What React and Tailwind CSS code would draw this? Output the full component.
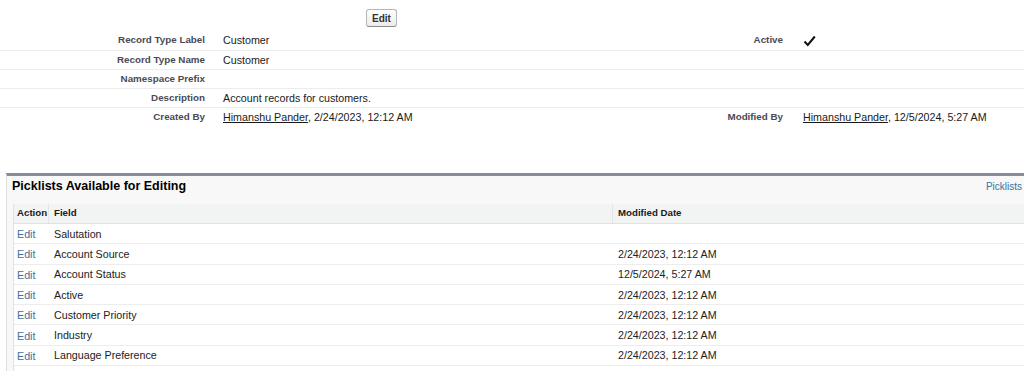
import React from 'react';

const DETAIL_ROWS = [
  { label: 'Record Type Label', value: 'Customer', label2: 'Active', value2: 'check' },
  { label: 'Record Type Name', value: 'Customer' },
  { label: 'Namespace Prefix', value: '' },
  { label: 'Description', value: 'Account records for customers.' },
  {
    label: 'Created By',
    value: { user: 'Himanshu Pander', rest: ', 2/24/2023, 12:12 AM' },
    label2: 'Modified By',
    value2: { user: 'Himanshu Pander', rest: ', 12/5/2024, 5:27 AM' },
  },
];

const PICKLISTS = [
  { field: 'Salutation', date: '' },
  { field: 'Account Source', date: '2/24/2023, 12:12 AM' },
  { field: 'Account Status', date: '12/5/2024, 5:27 AM' },
  { field: 'Active', date: '2/24/2023, 12:12 AM' },
  { field: 'Customer Priority', date: '2/24/2023, 12:12 AM' },
  { field: 'Industry', date: '2/24/2023, 12:12 AM' },
  { field: 'Language Preference', date: '2/24/2023, 12:12 AM' },
  { field: 'Ownership', date: '2/24/2023, 12:12 AM' },
];

function Value({ v }) {
  if (!v) return null;
  if (v === 'check') {
    return (
      <svg width="13" height="12" viewBox="0 0 13 12" className="mt-[1px]">
        <path d="M1.5 6.5 L4.8 10 L11.8 1.5" fill="none" stroke="#111" strokeWidth="2" />
      </svg>
    );
  }
  if (typeof v === 'object') {
    return (
      <span>
        <span className="underline">{v.user}</span>
        {v.rest}
      </span>
    );
  }
  return <span>{v}</span>;
}

export default function App() {
  return (
    <div
      className="w-[1024px] h-[371px] overflow-hidden bg-white text-[10.7px] text-[#1a1a1a]"
      style={{ fontFamily: '"Liberation Sans", Arial, sans-serif' }}
    >
      {/* button row */}
      <div className="pt-[9px] pl-[366px] h-[30px]">
        <button className="h-[18px] px-[5px] rounded-[3px] border border-[#b5b5b5] border-b-[#8a8a8a] bg-gradient-to-b from-[#ffffff] to-[#ececec] text-[10px] font-bold text-[#333] leading-[15px]">
          Edit
        </button>
      </div>

      {/* detail section */}
      <div className="flex flex-col">
        {DETAIL_ROWS.map((r, i) => (
          <div
            key={r.label}
            className={`flex items-center ${i === 0 ? 'h-[21px]' : 'h-[19px]'} ${i < DETAIL_ROWS.length - 1 ? 'border-b border-[#ececec]' : ''}`}
          >
            <div className="w-[213px] pr-[8px] text-right text-[9.8px] font-bold text-[#4a4a56]">{r.label}</div>
            <div className="w-[357px] pl-[10px]">
              <Value v={r.value} />
            </div>
            <div className="w-[220px] pr-[7px] text-right text-[9.8px] font-bold text-[#4a4a56]">{r.label2}</div>
            <div className="flex-1 pl-[13px] flex items-center">
              <Value v={r.value2} />
            </div>
          </div>
        ))}
      </div>

      {/* picklists block */}
      <div className="mt-[46px] ml-[6px] border-t-[3px] border-t-[#868d99] border-l border-l-[#e0e0e0] bg-[#f8f8f8] pl-[6px] pb-[10px]">
        <div className="flex items-center justify-between h-[20px]">
          <h3 className="text-[12.5px] font-bold text-[#000] -ml-[1px]">Picklists Available for Editing</h3>
          <span className="text-[10px] text-[#3f6f9c] pr-[2px]">Picklists</span>
        </div>
        <div className="mt-[8px] bg-white border-l border-l-[#e0e3e5]">
          <div className="flex h-[20px] items-center bg-[#f2f3f3] border-b border-[#e0e3e5] text-[9.7px] font-bold">
            <div className="w-[35px] pl-[3px] h-full flex items-center border-r border-[#e3e5e7]">Action</div>
            <div className="w-[564px] pl-[5px] h-full flex items-center border-r border-[#e3e5e7]">Field</div>
            <div className="flex-1 pl-[5px]">Modified Date</div>
          </div>
          {PICKLISTS.map((p) => (
            <div key={p.field} className="flex h-[20.3px] items-center border-b border-[#ededed] text-[10.7px]">
              <div className="w-[35px] pl-[3px] pt-[1px] text-[#3f6f9c]">Edit</div>
              <div className="w-[564px] pl-[5px] text-[#222]">{p.field}</div>
              <div className="flex-1 pl-[5px] text-[#222]">{p.date}</div>
            </div>
          ))}
        </div>
      </div>
    </div>
  );
}
